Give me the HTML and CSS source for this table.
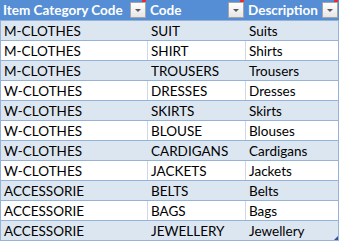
FILE: index.html
```html
<!DOCTYPE html>
<html>
<head>
<meta charset="utf-8">
<link rel="stylesheet" href="styles.css">
</head>
<body>
<div class="table">
  <div class="row head">
    <div class="cell c1"><span class="label">Item Category Code</span><span class="filter"></span></div>
    <div class="cell c2"><span class="label">Code</span><span class="filter"></span></div>
    <div class="cell c3"><span class="label">Description</span><span class="filter"></span></div>
  </div>
  <div class="row band"><div class="cell c1">M-CLOTHES</div><div class="cell c2">SUIT</div><div class="cell c3">Suits</div></div>
  <div class="row"><div class="cell c1">M-CLOTHES</div><div class="cell c2">SHIRT</div><div class="cell c3">Shirts</div></div>
  <div class="row band"><div class="cell c1">M-CLOTHES</div><div class="cell c2">TROUSERS</div><div class="cell c3">Trousers</div></div>
  <div class="row"><div class="cell c1">W-CLOTHES</div><div class="cell c2">DRESSES</div><div class="cell c3">Dresses</div></div>
  <div class="row band"><div class="cell c1">W-CLOTHES</div><div class="cell c2">SKIRTS</div><div class="cell c3">Skirts</div></div>
  <div class="row"><div class="cell c1">W-CLOTHES</div><div class="cell c2">BLOUSE</div><div class="cell c3">Blouses</div></div>
  <div class="row band"><div class="cell c1">W-CLOTHES</div><div class="cell c2">CARDIGANS</div><div class="cell c3">Cardigans</div></div>
  <div class="row"><div class="cell c1">W-CLOTHES</div><div class="cell c2">JACKETS</div><div class="cell c3">Jackets</div></div>
  <div class="row band"><div class="cell c1">ACCESSORIE</div><div class="cell c2">BELTS</div><div class="cell c3">Belts</div></div>
  <div class="row"><div class="cell c1">ACCESSORIE</div><div class="cell c2">BAGS</div><div class="cell c3">Bags</div></div>
  <div class="row band last"><div class="cell c1">ACCESSORIE</div><div class="cell c2">JEWELLERY</div><div class="cell c3">Jewellery<span class="grip"></span></div></div>
</div>
</body>
</html>
```
FILE: styles.css
```css
html, body { margin: 0; padding: 0; background: #ffffff; }
.table {
  width: 339px;
  font-family: "Lato", "Liberation Sans", sans-serif;
  font-size: 13.5px;
  color: #000;
  border-bottom: 1px solid #95B3D7;
  box-sizing: border-box;
}
.row {
  display: flex;
  height: 20px;
  box-sizing: border-box;
  border-top: 1px solid #95B3D7;
  border-left: 1px solid #95B3D7;
  border-right: 1px solid #95B3D7;
  background: #ffffff;
}
.row.band { background: #DCE6F1; }
.row.head {
  background: #558ED5;
  border-top: none;
  border-left: none;
  border-right: none;
  color: #fff;
  font-weight: bold;
}
.cell {
  display: flex;
  align-items: center;
  box-sizing: border-box;
  padding-left: 3px;
  padding-top: 1px;
  white-space: nowrap;
  overflow: hidden;
  position: relative;
}
.c1 { width: 146px; }
.c2 { width: 98px; border-left: 1px solid #D0D7E5; }
.c3 { flex: 1; border-left: 1px solid #D0D7E5; }
.row.band .c2, .row.band .c3 { border-left-color: #DCE6F1; }
.head .cell { padding-right: 1px; padding-top: 0; justify-content: space-between; }
.head .c1 { width: 147px; }
.head .c2, .head .c3 { border-left: none; }
.label { line-height: 20px; }
.filter {
  position: relative;
  width: 16px;
  height: 16px;
  box-sizing: border-box;
  border: 1px solid #A6A6A6;
  background: linear-gradient(#ffffff, #E6E6E6);
  flex: none;
}
.filter::after {
  content: "";
  position: absolute;
  left: 4px;
  top: 6px;
  border-left: 3px solid transparent;
  border-right: 3px solid transparent;
  border-top: 3px solid #595959;
}
.filter::before {
  content: "";
  position: absolute;
  right: -1px;
  top: -3px;
  width: 4px;
  height: 2px;
  background: #E03030;
}
.grip {
  position: absolute;
  right: 0;
  bottom: 0;
  width: 0;
  height: 0;
  border-left: 4px solid transparent;
  border-bottom: 4px solid #2F5597;
}
```
